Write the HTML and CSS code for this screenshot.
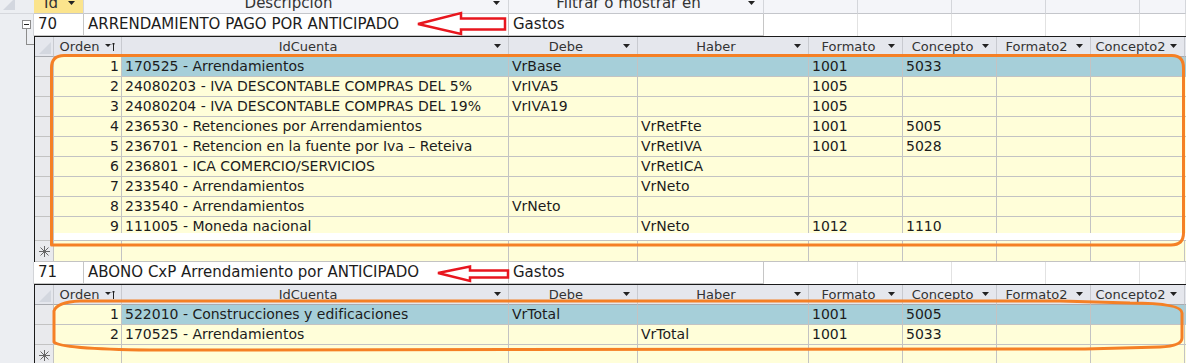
FILE: index.html
```html
<!DOCTYPE html>
<html lang="es">
<head>
    <meta charset="UTF-8">
    <title>Plantillas contables</title>
    <link rel="stylesheet" href="styles.css">
</head>
<body>
    <div class="sheet">
        <div class="outer head">
            <div class="gutter"><svg class="corner" width="13" height="13"><polygon points="0,12 12,0 12,12" fill="#d3d7df"/></svg></div>
            <div class="hcell sel-col"><span class="lbl">Id</span><svg class="dd" width="8" height="5"><polygon points="0,0 7,0 3.5,4" fill="#222"/></svg></div>
            <div class="hcell"><span class="lbl">Descripcion</span><svg class="dd" width="8" height="5"><polygon points="0,0 7,0 3.5,4" fill="#222"/></svg></div>
            <div class="hcell"><span class="lbl">Filtrar o mostrar en</span><svg class="dd" width="8" height="5"><polygon points="0,0 7,0 3.5,4" fill="#222"/></svg></div>
            <div class="hcell"></div><div class="hcell"></div><div class="hcell"></div><div class="hcell"></div><div class="hcell"></div>
        </div>

        <div class="outer rec">
            <div class="gutter"><svg width="34" height="22"><rect x="22.5" y="6.5" width="8" height="8" fill="#fff" stroke="#8c8c8c"/><line x1="24" y1="10.5" x2="29" y2="10.5" stroke="#222"/><line x1="26.5" y1="15" x2="26.5" y2="22" stroke="#8c8c8c"/></svg></div>
            <div class="cell">70</div>
            <div class="cell">ARRENDAMIENTO PAGO POR ANTICIPADO</div>
            <div class="cell">Gastos</div>
            <div class="cell blank"></div><div class="cell blank"></div><div class="cell blank"></div><div class="cell blank"></div><div class="cell blank"></div>
        </div>

        <div class="nest">
            <div class="gutter"><svg width="34" height="10"><line x1="26.5" y1="0" x2="26.5" y2="8.5" stroke="#8c8c8c"/><line x1="26" y1="8.5" x2="34" y2="8.5" stroke="#8c8c8c"/></svg></div>
            <div class="sub">
                <div class="row shead">
                    <div class="hc sel"><svg class="corner" width="13" height="13"><polygon points="0,12 12,0 12,12" fill="#d3d7df"/></svg></div>
                    <div class="hc"><span class="lbl">Orden</span><svg class="dd" width="10" height="9"><polygon points="0,2 6,2 3,5" fill="#222"/><line x1="8.5" y1="1" x2="8.5" y2="9" stroke="#222"/><polyline points="7,2.5 8.5,1 10,2.5" fill="none" stroke="#222"/></svg></div>
                    <div class="hc"><span class="lbl">IdCuenta</span><svg class="dd" width="8" height="5"><polygon points="0,0 7,0 3.5,4" fill="#222"/></svg></div>
                    <div class="hc"><span class="lbl">Debe</span><svg class="dd" width="8" height="5"><polygon points="0,0 7,0 3.5,4" fill="#222"/></svg></div>
                    <div class="hc"><span class="lbl">Haber</span><svg class="dd" width="8" height="5"><polygon points="0,0 7,0 3.5,4" fill="#222"/></svg></div>
                    <div class="hc"><span class="lbl">Formato</span><svg class="dd" width="8" height="5"><polygon points="0,0 7,0 3.5,4" fill="#222"/></svg></div>
                    <div class="hc"><span class="lbl">Concepto</span><svg class="dd" width="8" height="5"><polygon points="0,0 7,0 3.5,4" fill="#222"/></svg></div>
                    <div class="hc"><span class="lbl">Formato2</span><svg class="dd" width="8" height="5"><polygon points="0,0 7,0 3.5,4" fill="#222"/></svg></div>
                    <div class="hc"><span class="lbl">Concepto2</span><svg class="dd" width="8" height="5"><polygon points="0,0 7,0 3.5,4" fill="#222"/></svg></div>
                    <div class="hc"></div>
                </div>
                <div class="row current">
                    <div class="c sel"></div><div class="c num">1</div><div class="c">170525 - Arrendamientos</div><div class="c">VrBase</div><div class="c"></div><div class="c">1001</div><div class="c">5033</div><div class="c"></div><div class="c"></div><div class="c"></div>
                </div>
                <div class="row">
                    <div class="c sel"></div><div class="c num">2</div><div class="c">24080203 - IVA DESCONTABLE COMPRAS DEL 5%</div><div class="c">VrIVA5</div><div class="c"></div><div class="c">1005</div><div class="c"></div><div class="c"></div><div class="c"></div><div class="c"></div>
                </div>
                <div class="row">
                    <div class="c sel"></div><div class="c num">3</div><div class="c">24080204 - IVA DESCONTABLE COMPRAS DEL 19%</div><div class="c">VrIVA19</div><div class="c"></div><div class="c">1005</div><div class="c"></div><div class="c"></div><div class="c"></div><div class="c"></div>
                </div>
                <div class="row">
                    <div class="c sel"></div><div class="c num">4</div><div class="c">236530 - Retenciones por Arrendamientos</div><div class="c"></div><div class="c">VrRetFte</div><div class="c">1001</div><div class="c">5005</div><div class="c"></div><div class="c"></div><div class="c"></div>
                </div>
                <div class="row">
                    <div class="c sel"></div><div class="c num">5</div><div class="c">236701 - Retencion en la fuente por Iva – Reteiva</div><div class="c"></div><div class="c">VrRetIVA</div><div class="c">1001</div><div class="c">5028</div><div class="c"></div><div class="c"></div><div class="c"></div>
                </div>
                <div class="row">
                    <div class="c sel"></div><div class="c num">6</div><div class="c">236801 - ICA COMERCIO/SERVICIOS</div><div class="c"></div><div class="c">VrRetICA</div><div class="c"></div><div class="c"></div><div class="c"></div><div class="c"></div><div class="c"></div>
                </div>
                <div class="row">
                    <div class="c sel"></div><div class="c num">7</div><div class="c">233540 - Arrendamientos</div><div class="c"></div><div class="c">VrNeto</div><div class="c"></div><div class="c"></div><div class="c"></div><div class="c"></div><div class="c"></div>
                </div>
                <div class="row">
                    <div class="c sel"></div><div class="c num">8</div><div class="c">233540 - Arrendamientos</div><div class="c">VrNeto</div><div class="c"></div><div class="c"></div><div class="c"></div><div class="c"></div><div class="c"></div><div class="c"></div>
                </div>
                <div class="row cut">
                    <div class="c sel"></div><div class="c num">9</div><div class="c">111005 - Moneda nacional</div><div class="c"></div><div class="c">VrNeto</div><div class="c">1012</div><div class="c">1110</div><div class="c"></div><div class="c"></div><div class="c"></div>
                </div>
                <div class="band"><div class="sel"></div><div></div></div>
                <div class="row newrow topline">
                    <div class="c sel"><svg width="11" height="11"><g stroke="#666" stroke-width="1"><line x1="5.5" y1="0" x2="5.5" y2="11"/><line x1="0" y1="5.5" x2="11" y2="5.5"/><line x1="1.5" y1="1.5" x2="9.5" y2="9.5"/><line x1="9.5" y1="1.5" x2="1.5" y2="9.5"/></g></svg></div><div class="c"></div><div class="c"></div><div class="c"></div><div class="c"></div><div class="c"></div><div class="c"></div><div class="c"></div><div class="c"></div><div class="c"></div>
                </div>
            </div>
        </div>

        <div class="outer rec">
            <div class="gutter"></div>
            <div class="cell">71</div>
            <div class="cell">ABONO CxP Arrendamiento por ANTICIPADO</div>
            <div class="cell">Gastos</div>
            <div class="cell blank"></div><div class="cell blank"></div><div class="cell blank"></div><div class="cell blank"></div><div class="cell blank"></div>
        </div>

        <div class="nest">
            <div class="gutter"></div>
            <div class="sub">
                <div class="row shead">
                    <div class="hc sel"><svg class="corner" width="13" height="13"><polygon points="0,12 12,0 12,12" fill="#d3d7df"/></svg></div>
                    <div class="hc"><span class="lbl">Orden</span><svg class="dd" width="10" height="9"><polygon points="0,2 6,2 3,5" fill="#222"/><line x1="8.5" y1="1" x2="8.5" y2="9" stroke="#222"/><polyline points="7,2.5 8.5,1 10,2.5" fill="none" stroke="#222"/></svg></div>
                    <div class="hc"><span class="lbl">IdCuenta</span><svg class="dd" width="8" height="5"><polygon points="0,0 7,0 3.5,4" fill="#222"/></svg></div>
                    <div class="hc"><span class="lbl">Debe</span><svg class="dd" width="8" height="5"><polygon points="0,0 7,0 3.5,4" fill="#222"/></svg></div>
                    <div class="hc"><span class="lbl">Haber</span><svg class="dd" width="8" height="5"><polygon points="0,0 7,0 3.5,4" fill="#222"/></svg></div>
                    <div class="hc"><span class="lbl">Formato</span><svg class="dd" width="8" height="5"><polygon points="0,0 7,0 3.5,4" fill="#222"/></svg></div>
                    <div class="hc"><span class="lbl">Concepto</span><svg class="dd" width="8" height="5"><polygon points="0,0 7,0 3.5,4" fill="#222"/></svg></div>
                    <div class="hc"><span class="lbl">Formato2</span><svg class="dd" width="8" height="5"><polygon points="0,0 7,0 3.5,4" fill="#222"/></svg></div>
                    <div class="hc"><span class="lbl">Concepto2</span><svg class="dd" width="8" height="5"><polygon points="0,0 7,0 3.5,4" fill="#222"/></svg></div>
                    <div class="hc"></div>
                </div>
                <div class="row current">
                    <div class="c sel"></div><div class="c num">1</div><div class="c">522010 - Construcciones y edificaciones</div><div class="c">VrTotal</div><div class="c"></div><div class="c">1001</div><div class="c">5005</div><div class="c"></div><div class="c"></div><div class="c"></div>
                </div>
                <div class="row">
                    <div class="c sel"></div><div class="c num">2</div><div class="c">170525 - Arrendamientos</div><div class="c"></div><div class="c">VrTotal</div><div class="c">1001</div><div class="c">5033</div><div class="c"></div><div class="c"></div><div class="c"></div>
                </div>
                <div class="row newrow">
                    <div class="c sel"><svg width="11" height="11"><g stroke="#666" stroke-width="1"><line x1="5.5" y1="0" x2="5.5" y2="11"/><line x1="0" y1="5.5" x2="11" y2="5.5"/><line x1="1.5" y1="1.5" x2="9.5" y2="9.5"/><line x1="9.5" y1="1.5" x2="1.5" y2="9.5"/></g></svg></div><div class="c"></div><div class="c"></div><div class="c"></div><div class="c"></div><div class="c"></div><div class="c"></div><div class="c"></div><div class="c"></div><div class="c"></div>
                </div>
            </div>
        </div>
    </div>

    <!-- notas dibujadas encima de la captura -->
    <svg class="marks" width="1186" height="363">
        <g fill="none" stroke="#f58025" stroke-width="3" stroke-linejoin="round">
            <path d="M51.5 245 L51.5 68 Q51.5 55.5 64 55.5 L1172 55.5 Q1183.5 55.5 1183.5 68 L1183.5 233 Q1183.5 245 1171 245 Z"/>
            <path d="M54 342 L54 311 Q57 302 80 301 L1060 301 L1130 303 Q1182 303 1182 313 L1182 338 Q1182 346 1160 347 L1085 349 L150 350 Q60 349 54 342 Z"/>
        </g>
        <g fill="none" stroke="#e8161e" stroke-width="2.5" stroke-linejoin="miter">
            <polygon points="418,24 461,13 461,18.5 505,18.5 505,29.5 461,29.5 461,34"/>
            <polygon points="438,273 470,266.5 470,270.5 508,270.5 508,277.5 470,277.5 470,281"/>
        </g>
    </svg>
</body>
</html>
```

FILE: styles.css
```css
body {
    margin: 0;
    position: relative;
    overflow: hidden;
    height: 363px;
    background-color: #ffffff;
    font-family: "DejaVu Sans", sans-serif;
    color: #1c1c1c;
}
.sheet {
    margin-top: -7px;
}
.gutter {
    background-color: #eceef2;
    border-right: 1px solid #d2d4d8;
    box-sizing: border-box;
}
.gutter svg {
    display: block;
}
.outer {
    display: grid;
    grid-template-columns: 34px 50px 425px 255px 94px 94px 94px 94px 1fr;
    font-size: 15px;
}
.outer.head {
    height: 21px;
    background-color: #f4f5f9;
}
.outer.head .gutter {
    border-right: none;
    border-bottom: 1px solid #d6d8dd;
}
.corner {
    display: block;
    margin: 5px 0 0 3px;
}
.hcell {
    display: flex;
    align-items: center;
    border-right: 1px solid #d4d6db;
    border-bottom: 1px solid #c4c6cb;
    box-sizing: border-box;
    color: #333;
    line-height: 20px;
}
.hcell.sel-col {
    background-color: #fbe48d;
}
.lbl {
    flex: 1;
    text-align: center;
    white-space: nowrap;
}
.dd {
    flex: none;
    margin-right: 7px;
}
.rec {
    height: 22px;
}
.rec .cell {
    background-color: #ffffff;
    border-right: 1px solid #c6c6c6;
    border-bottom: 1px solid #c6c6c6;
    box-sizing: border-box;
    padding-left: 4px;
    line-height: 21px;
    white-space: nowrap;
    overflow: hidden;
}
.rec .cell.blank {
    border-right-color: #e2e2e2;
    border-bottom: none;
}
.nest {
    display: flex;
}
.nest > .gutter {
    flex: none;
    width: 34px;
    border-right: none;
}
.sub {
    flex: 1;
    border-left: 1px solid #1a1a1a;
    border-top: 1px solid #1a1a1a;
    font-size: 14px;
}
.row {
    display: grid;
    grid-template-columns: 19px 68px 387px 129px 171px 94px 94px 94px 94px 1fr;
    height: 20px;
}
.shead .hc {
    display: flex;
    align-items: center;
    background-color: #e5e7ed;
    border-right: 1px solid #c8cad0;
    border-bottom: 1px solid #a9abb0;
    box-sizing: border-box;
    color: #333;
    font-size: 13px;
}
.shead .hc.sel .corner {
    margin: 4px 0 0 4px;
}
.shead .dd {
    margin-right: 6px;
}
.c {
    background-color: #fffed9;
    border-right: 1px solid #c3c3c3;
    border-bottom: 1px solid #c3c3c3;
    box-sizing: border-box;
    padding: 0 3px 0 3px;
    line-height: 19px;
    white-space: nowrap;
    overflow: hidden;
}
.c.sel {
    background-color: #e9eaed;
    padding: 0;
}
.c.num {
    text-align: right;
    padding-right: 2px;
}
.current .c:nth-child(n+3) {
    background-color: #a6cfd9;
}
.row.cut {
    height: 16px;
}
.row.cut .c {
    border-bottom: none;
    line-height: 19px;
}
.band {
    display: grid;
    grid-template-columns: 19px 1fr;
    height: 7px;
}
.band .sel {
    background-color: #e9eaed;
    border-right: 1px solid #c3c3c3;
}
.newrow {
    height: 21px;
}
.newrow.topline {
    border-top: 1px solid #c3c3c3;
}
.newrow .sel {
    display: flex;
    align-items: center;
    justify-content: center;
}
.marks {
    position: absolute;
    top: 0;
    left: 0;
}
```
